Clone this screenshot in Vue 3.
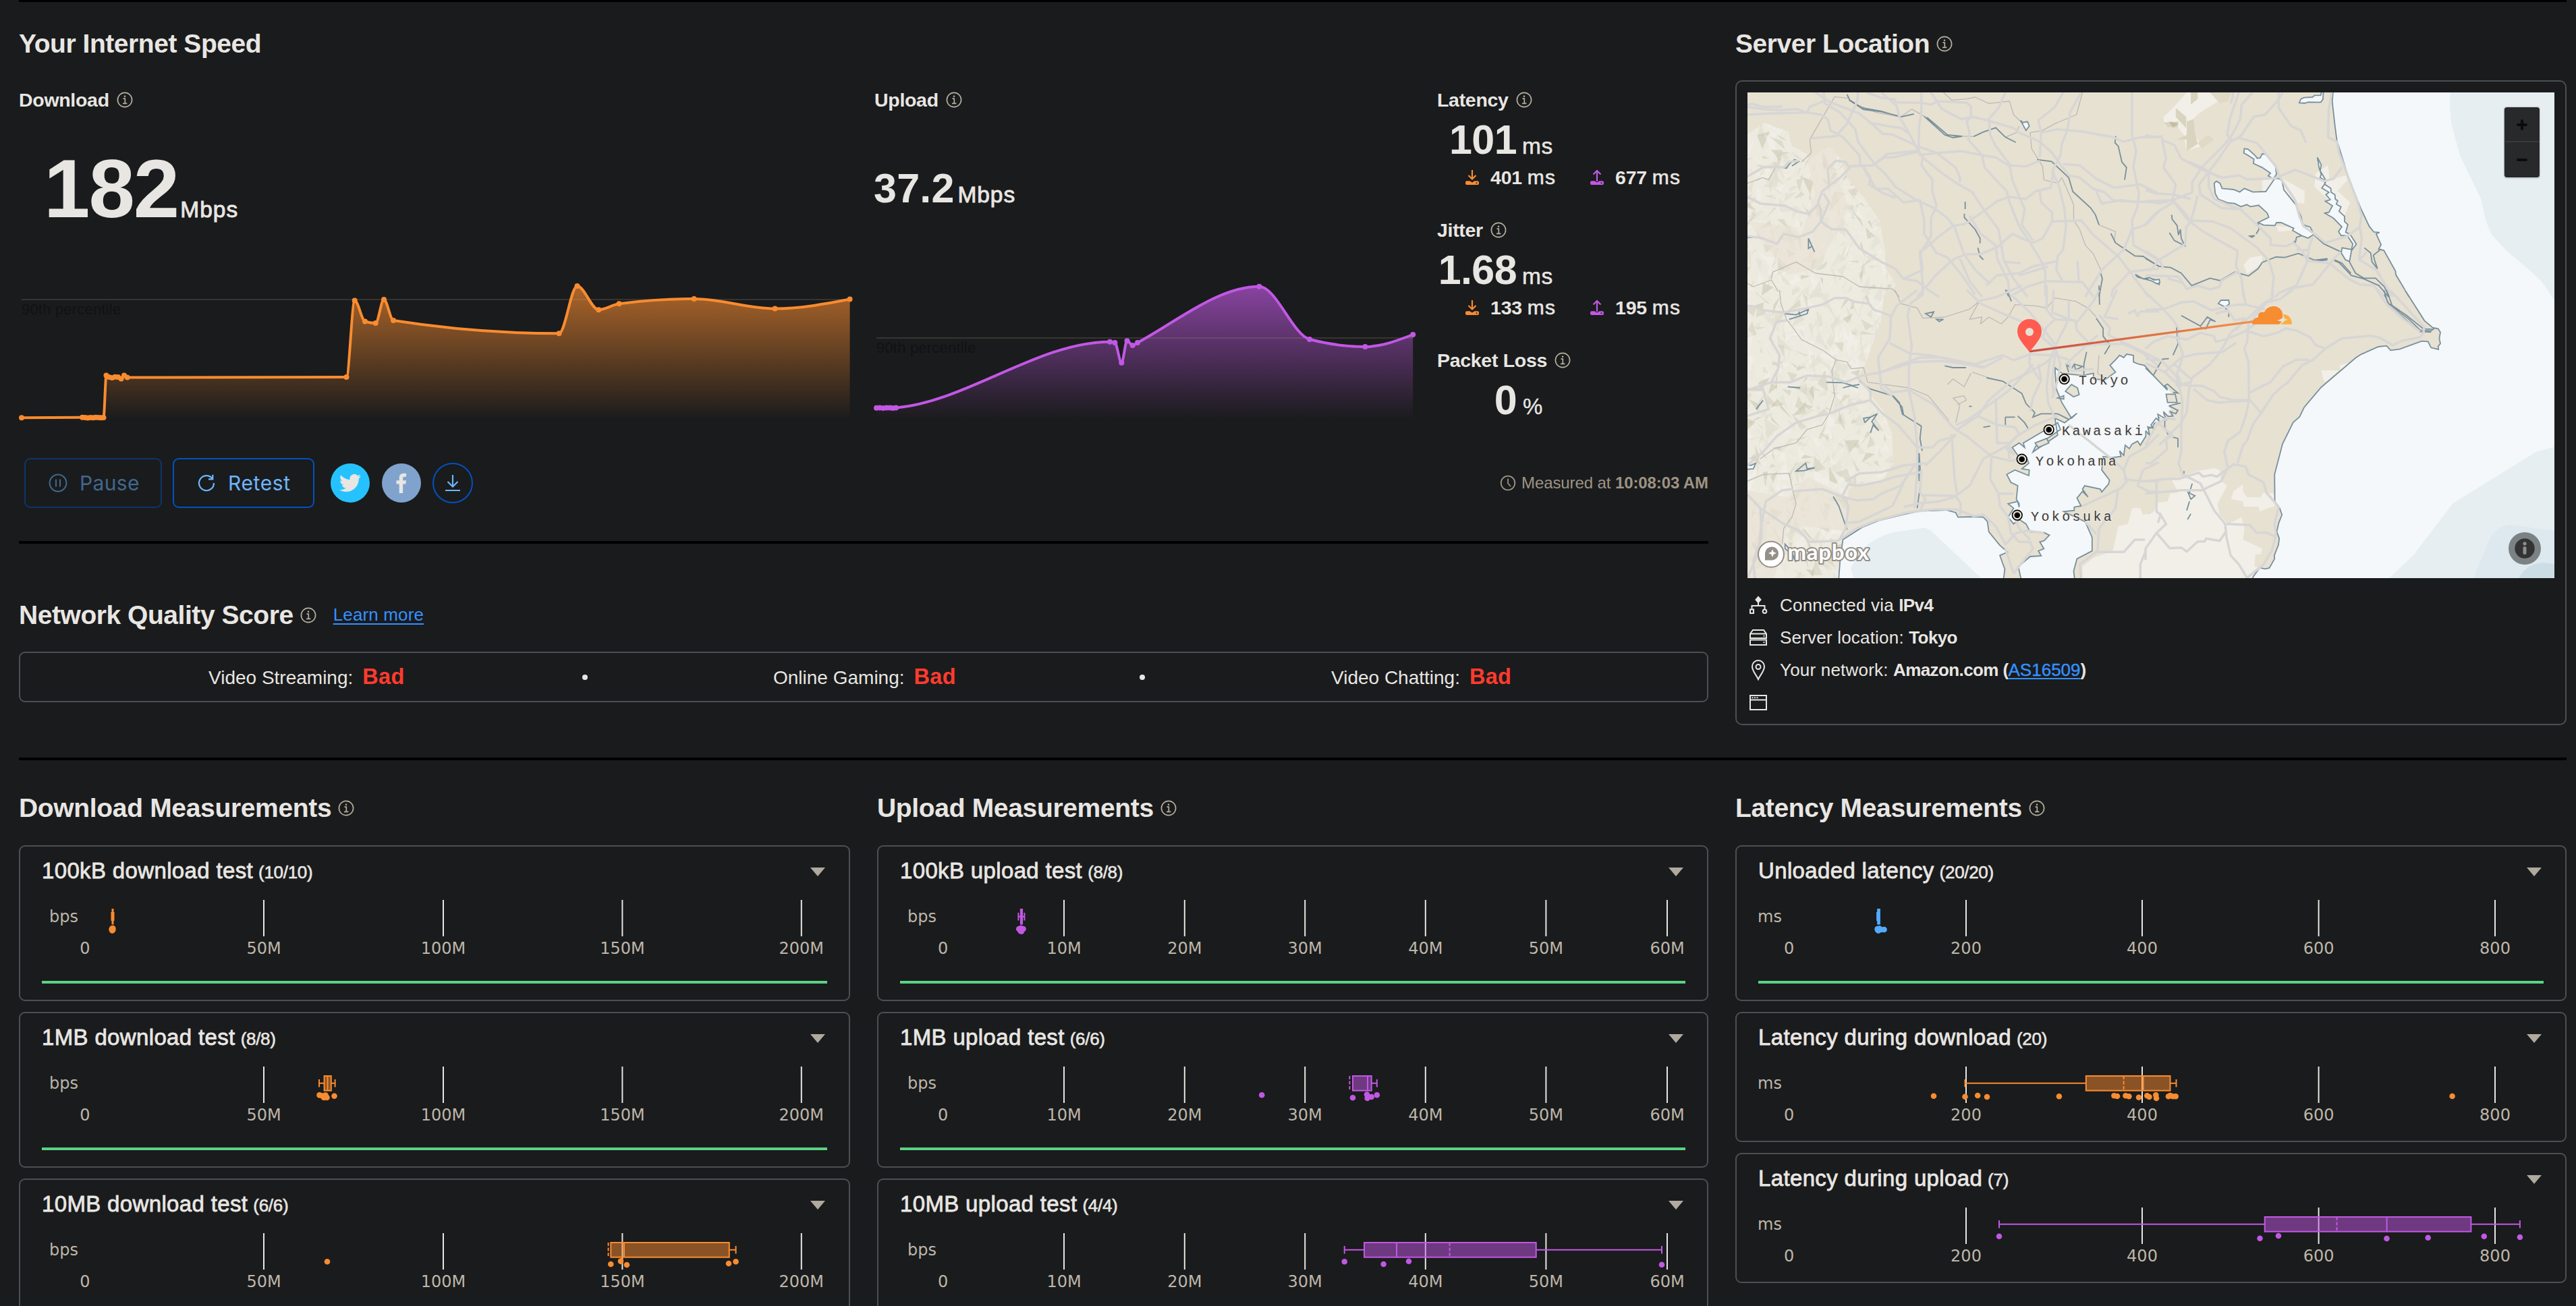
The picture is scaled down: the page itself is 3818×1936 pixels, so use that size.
<script setup>
import { h } from 'vue'

const ORANGE = '#f98c30'
const PURPLE = '#c158e4'
const BLUE = '#52abff'

/* ---------- speed over time ---------- */
// Monotone cubic interpolation through the measured points.
function curve(p) {
  const n = p.length
  const dx = []
  const slope = []
  for (let i = 0; i < n - 1; i++) {
    dx[i] = p[i + 1][0] - p[i][0]
    slope[i] = (p[i + 1][1] - p[i][1]) / dx[i]
  }
  const m = []
  for (let i = 1; i < n - 1; i++) {
    const a = slope[i - 1]
    const b = slope[i]
    const mid = (a * dx[i] + b * dx[i - 1]) / (dx[i] + dx[i - 1])
    m[i] = a * b <= 0 ? 0 : Math.sign(a) * Math.min(Math.abs(a), Math.abs(b), 0.5 * Math.abs(mid)) * 2
  }
  m[0] = (3 * slope[0] - m[1]) / 2
  m[n - 1] = (3 * slope[n - 2] - m[n - 2]) / 2
  let d = `M${p[0][0]},${p[0][1]}`
  for (let i = 0; i < n - 1; i++) {
    const t = dx[i] / 3
    d += `C${p[i][0] + t},${p[i][1] + m[i] * t} ${p[i + 1][0] - t},${p[i + 1][1] - m[i + 1] * t} ${p[i + 1][0]},${p[i + 1][1]}`
  }
  return d
}

const downPts = [
  [32, 619.2], [122, 618.8], [126, 619], [130, 619.4], [134, 618.9], [138, 619.2], [142, 618.8], [146, 619], [150, 619.2], [153.5, 619],
  [157.5, 556.5], [161.6, 559], [166, 560], [170.5, 558.8], [175, 559], [179.6, 561.5], [184, 556.5], [188.6, 559.6], [513.5, 559],
  [525.7, 445.6], [541, 476.5], [556.7, 479], [569, 444], [583, 475], [828.6, 494.3], [855.5, 424], [887.3, 459.2], [917.6, 450.3],
  [1028.6, 443], [1148.6, 457.6], [1259.6, 443.5],
]
const upPts = [
  [1300, 604.8], [1305, 604.4], [1310, 605], [1315, 604.6], [1320, 604.4], [1324.5, 605], [1329, 604.6], [1646, 506.8], [1653.4, 508],
  [1663.3, 537.7], [1671.5, 505.2], [1679.7, 512], [1687, 508], [1867.3, 424.7], [1942, 503], [2024.4, 514], [2095.2, 496],
]
const charts = {
  down: { pts: downPts, color: ORANGE, x0: 28, w: 1232, py: 444, id: 'fade-down' },
  up: { pts: upPts, color: PURPLE, x0: 1296, w: 800, py: 501, id: 'fade-up' },
}
for (const c of Object.values(charts)) {
  c.line = curve(c.pts)
  c.start = c.pts[0][0]
  c.end = c.pts[c.pts.length - 1][0]
  c.area = `${c.line}L${c.end},624L${c.start},624Z`
}

const SpeedChart = ({ c }) =>
  h('svg', { class: 'speed-chart', width: c.w, height: 220, viewBox: `${c.x0} 412 ${c.w} 220`, style: 'display:block;overflow:visible' }, [
    h('defs', [
      h('linearGradient', { id: c.id, gradientUnits: 'userSpaceOnUse', x1: 0, x2: 0, y1: 424, y2: 622 }, [
        h('stop', { offset: 0, 'stop-color': c.color, 'stop-opacity': 0.66 }),
        h('stop', { offset: 1, 'stop-color': c.color, 'stop-opacity': 0 }),
      ]),
    ]),
    h('path', { d: c.area, fill: `url(#${c.id})` }),
    h('path', { d: `M${c.start},${c.py}H${c.end}`, stroke: '#b0a080', 'stroke-opacity': 0.2, 'stroke-width': 2 }),
    h('text', { x: c.start, y: c.py + 21.5, 'font-size': 22, 'letter-spacing': 0.2, fill: '#111213' }, '90th percentile'),
    h('path', { d: c.line, fill: 'none', stroke: c.color, 'stroke-width': 4, 'stroke-linejoin': 'round' }),
    ...c.pts.map(([x, y]) => h('circle', { cx: x, cy: y, r: 4, fill: c.color })),
  ])

/* ---------- box plots ---------- */
const downTicks = [[98, '0'], [363, '50M'], [629, '100M'], [894.4, '150M'], [1159.8, '200M']]
const upTicks = [[97.6, '0'], [277, '10M'], [455.8, '20M'], [634.2, '30M'], [812.8, '40M'], [991.4, '50M'], [1171, '60M']]
const msTicks = [[79.7, '0'], [342, '200'], [603, '400'], [864.6, '600'], [1126, '800']]

const sections = [
  {
    title: 'Download Measurements', unit: 'bps', ticks: downTicks,
    cards: [
      { name: '100kB download test', count: '(10/10)', bar: true, color: ORANGE,
        box: { solid: [139] },
        dots: [[138, 123.5], [139.4, 125], [138.4, 126.5], [137.6, 125], [139.2, 123]] },
      { name: '1MB download test', count: '(8/8)', bar: true, color: ORANGE,
        box: { lo: 445, q1: 452.6, med: 457.5, q3: 462.8, hi: 468.6 },
        dots: [[445.5, 123.4], [450, 124.6], [452, 127], [454.5, 123.6], [455.5, 126], [456.5, 127], [467.5, 124.7]] },
      { name: '10MB download test', count: '(6/6)', bar: true, color: ORANGE,
        box: { q1: 877.3, med: 897, q3: 1052.8, hi: 1062.6, mean: 873.6 },
        dots: [[457, 123.3], [877.3, 127], [892, 122.6], [901, 128], [1052, 126], [1062.6, 123.3]] },
    ],
  },
  {
    title: 'Upload Measurements', unit: 'bps', ticks: upTicks,
    cards: [
      { name: '100kB upload test', count: '(8/8)', bar: true, color: PURPLE,
        box: { solid: [213.4, 214.6], lo: 209.4, hi: 218.4 },
        dots: [[210.2, 124], [213, 123], [214, 127.6], [216.6, 124], [214, 125], [212.4, 127]] },
      { name: '1MB upload test', count: '(6/6)', bar: true, color: PURPLE,
        box: { q1: 705, med: 727, q3: 732.7, hi: 740.8, mean: 700.4 },
        dots: [[570.2, 123.3], [705, 127.3], [726, 122.5], [726.6, 128], [732.7, 126], [740.8, 123.3]] },
      { name: '10MB upload test', count: '(4/4)', bar: true, color: PURPLE,
        box: { lo: 692.7, q1: 722, med: 770, q3: 976.7, hi: 1163, mean: 848.6 },
        dots: [[692.7, 123.2], [750.6, 127], [788, 122.7], [1163, 127.7]] },
    ],
  },
  {
    title: 'Latency Measurements', unit: 'ms', ticks: msTicks,
    cards: [
      { name: 'Unloaded latency', count: '(20/20)', bar: true, color: BLUE,
        box: { solid: [211.6, 213.4] },
        dots: [[210.6, 124], [212, 126.5], [211, 125.5], [213.4, 123.6], [216, 125], [220.6, 125]] },
      { name: 'Latency during download', count: '(20)', color: ORANGE,
        box: { lo: 340.5, q1: 519.8, med: 604.6, q3: 644.5, hi: 653.5, mean: 575.6 },
        dots: [[294, 124.7], [340.5, 125.7], [359.2, 124], [373, 126], [479.9, 125.3], [561.4, 124.3], [566, 125], [578.5, 124.3], [583.4, 125.3], [598, 126.7], [610.3, 124.3], [613.5, 126], [623.3, 123.3], [624, 128], [642, 125.3], [644.5, 124], [648.6, 125.3], [652.7, 125.3], [1062.6, 125]] },
      { name: 'Latency during upload', count: '(7)', color: PURPLE,
        box: { lo: 391, q1: 784.7, med: 965.6, q3: 1090.4, hi: 1162.9, mean: 891.5 },
        dots: [[391, 123.7], [777.5, 126.7], [805, 123], [965.5, 127], [1026.7, 125.7], [1109.8, 123.7], [1162.9, 125]] },
    ],
  },
]

/* ---------- map relief ---------- */
// Jittered triangles give the mountains their faceted shading.
let seed = 11
const rnd = () => ((seed = (seed * 16807) % 2147483647) / 2147483647)
const shades = ['#f4f1eb', '#f4f1eb', '#eae7dc', '#e0decf', '#dcd9ca', '#d0ccb8', '#c6c2aa', '#f0ede5']
const facets = []
for (let y = 48; y < 720; y += 12) {
  for (let x = -6; x < 250; x += 11) {
    const q = () => [(x + rnd() * 26 - 6).toFixed(0), (y + rnd() * 34 - 10).toFixed(0)].join()
    facets.push({ d: `M${q()}L${q()}L${q()}Z`, f: shades[Math.floor(rnd() * shades.length)] })
  }
}
const cities = [
  { n: 'Tokyo', x: 469.6, y: 425, tx: 491, ty: 433 },
  { n: 'Kawasaki', x: 446.7, y: 500, tx: 466, ty: 507.7 },
  { n: 'Yokohama', x: 406.7, y: 543.7, tx: 427, ty: 552.7 },
  { n: 'Yokosuka', x: 399.8, y: 626.7, tx: 420, ty: 635 },
]

/* ---------- small icons ---------- */
const InfoIcon = () =>
  h('svg', { width: 24, height: 24, viewBox: '0 0 24 24', fill: 'none', stroke: '#b5ae9f', 'stroke-width': 1.7, style: 'display:block;flex:none' }, [
    h('circle', { cx: 12, cy: 12, r: 10.6 }),
    h('path', { d: 'M9.5 10.2H12.3V17.3M9 17.3H15.4' }),
    h('circle', { cx: 12, cy: 6.8, r: 1.3, fill: '#b5ae9f', stroke: 'none' }),
  ])
const LoadIcon = (props) => {
  const color = props.up ? PURPLE : ORANGE
  return h('svg', { width: 22, height: 24, viewBox: '0 0 22 24', fill: 'none', stroke: color, 'stroke-width': 2.2, style: 'display:block;flex:none;margin-right:16px' }, [
    h('path', { d: props.up ? 'M11 18V2M5.5 7.5L11 2L16.5 7.5' : 'M11 1V14M5.5 9L11 14.5L16.5 9' }),
    h('path', { d: 'M3 17.2H7.5L11 19.5L14.5 17.2H19A2 2 0 0 1 21 19.2V21A2 2 0 0 1 19 23H3A2 2 0 0 1 1 21V19.2A2 2 0 0 1 3 17.2Z', fill: color, stroke: 'none' }),
    h('circle', { cx: 17.5, cy: 20.2, r: 1, fill: '#1a1b1c', stroke: 'none' }),
  ])
}
LoadIcon.props = { up: Boolean }
</script>

<template>
  <div class="page">
    <hr class="rule top" />
    <div class="upper">
      <div class="left">
        <h2>Your Internet Speed</h2>
        <div class="speeds">
          <section>
            <h3>Download <InfoIcon /></h3>
            <p class="value big"><b>182</b><span>Mbps</span></p>
            <SpeedChart :c="charts.down" />
          </section>
          <section>
            <h3 class="up-label">Upload <InfoIcon /></h3>
            <p class="value mid"><b>37.2</b><span>Mbps</span></p>
            <SpeedChart :c="charts.up" />
          </section>
          <section class="stats">
            <div class="stat">
              <h3>Latency <InfoIcon /></h3>
              <p class="value small"><b>101</b><span>ms</span></p>
              <p class="sub"><span><LoadIcon /><b>401</b>&nbsp;<i>ms</i></span><span><LoadIcon up /><b>677</b>&nbsp;<i>ms</i></span></p>
            </div>
            <div class="stat">
              <h3>Jitter <InfoIcon /></h3>
              <p class="value small"><b>1.68</b><span>ms</span></p>
              <p class="sub"><span><LoadIcon /><b>133</b>&nbsp;<i>ms</i></span><span><LoadIcon up /><b>195</b>&nbsp;<i>ms</i></span></p>
            </div>
            <div class="stat">
              <h3>Packet Loss <InfoIcon /></h3>
              <p class="value small pct"><b>0</b><span>%</span></p>
            </div>
          </section>
        </div>

        <div class="actions">
          <button class="btn disabled">
            <svg width="28" height="28" viewBox="0 0 28 28" fill="none" stroke="currentColor" stroke-width="2"><circle cx="14" cy="14" r="12.4" /><path d="M11 8.5V19.5M17 8.5V19.5" /></svg>
            Pause
          </button>
          <button class="btn">
            <svg width="28" height="28" viewBox="0 0 28 28" fill="none" stroke="currentColor" stroke-width="2.2"><path d="M22.5 7.2A11 11 0 1 0 25 14M23.3 1.8V8.3H17" /></svg>
            Retest
          </button>
          <span class="round tw">
            <svg width="32" height="32" viewBox="0 0 24 24" fill="#e8e6e3"><path d="M23.95 4.57a10 10 0 0 1-2.82.77 4.96 4.96 0 0 0 2.16-2.72c-.95.55-2 .95-3.13 1.18a4.92 4.92 0 0 0-8.38 4.48C7.69 8.1 4.07 6.13 1.64 3.16a4.82 4.82 0 0 0-.67 2.48c0 1.71.87 3.21 2.19 4.1a4.9 4.9 0 0 1-2.23-.62v.06a4.92 4.92 0 0 0 3.95 4.83 5 5 0 0 1-2.21.08 4.94 4.94 0 0 0 4.6 3.42A9.87 9.87 0 0 1 0 19.54a13.99 13.99 0 0 0 7.55 2.21c9.05 0 14-7.5 14-13.98 0-.21 0-.42-.02-.63a9.94 9.94 0 0 0 2.46-2.55z" /></svg>
          </span>
          <span class="round fb">
            <svg width="30" height="30" viewBox="0 0 24 24" fill="#e8e6e3"><path d="M9.4 24V13.1H6V8.9H9.4V5.9C9.4 2.4 11.4.6 14.6.6H17.6V4.5H15.6C14 4.5 13.7 5.2 13.7 6.4V8.9H17.6L17 13.1H13.7V24Z" /></svg>
          </span>
          <span class="round dl">
            <svg width="24" height="26" viewBox="0 0 24 26" fill="none" stroke="#6cb6ff" stroke-width="2.2"><path d="M12 1V18M4.5 11L12 18.5L19.5 11M1 24H23" /></svg>
          </span>
          <span class="measured">
            <svg width="24" height="24" viewBox="0 0 24 24" fill="none" stroke="#9d9384" stroke-width="1.8"><circle cx="12" cy="12" r="10.3" /><path d="M12 5.5V12.5L16 17" /></svg>
            Measured at&nbsp;<b>10:08:03 AM</b>
          </span>
        </div>

        <hr class="rule" />
        <h2 class="nqs">Network Quality Score <InfoIcon /><a>Learn more</a></h2>
        <div class="scores">
          <span class="score">Video Streaming:<b>Bad</b></span>
          <i class="bullet"></i>
          <span class="score">Online Gaming:<b>Bad</b></span>
          <i class="bullet"></i>
          <span class="score">Video Chatting:<b>Bad</b></span>
        </div>
      </div>

      <div class="right">
        <h2>Server Location <InfoIcon /></h2>
        <div class="panel">
          <svg class="map" width="1196" height="720" viewBox="0 0 1196 720">
            <defs>
              <clipPath id="hills">
                <path d="M0,62 L25,45 L60,58 L66,80 L98,95 L122,80 L140,100 L146,125 L172,155 L196,190 L204,235 L204,260 L222,285 L202,300 L198,340 L188,365 L176,400 L162,425 L180,445 L200,470 L214,505 L216,550 L200,575 L150,588 L146,650 L140,720 H0 Z" />
              </clipPath>
              <linearGradient id="route" gradientUnits="userSpaceOnUse" x1="418" y1="0" x2="750" y2="0">
                <stop offset="0" stop-color="#c94c3f" /><stop offset="1" stop-color="#f1924a" />
              </linearGradient>
            </defs>
            <rect width="1196" height="720" fill="#e7e1d2" />
            <g clip-path="url(#hills)">
              <rect width="260" height="720" fill="#edeae0" />
              <path v-for="(t, i) in facets" :key="i" :d="t.d" :fill="t.f" opacity=".5" />
              <path d="M80,60 L140,70 L128,110 L150,170 L120,230 L95,270 L80,210 L100,150Z M0,190 L70,200 L110,260 L60,270Z M0,590 L60,600 L90,570 L150,600 L145,650 L60,640 L40,720 H0Z" fill="#e7e1d2" opacity=".6" />
            </g>

            <!-- north-west tile -->
            <g transform="translate(-30 -137) scale(.40816 .33333)">
              <g class="border">
                <path d="M73,815L130,790L150,800L180,735M300,620L390,430L440,437M300,620L305,680L270,720M160,1240L165,1210L250,1165L320,1215L420,1230L480,1275L600,1285L625,1320M73,1260L95,1275L160,1245L185,1295M785,411L815,445L870,440L900,432L950,460L1025,450L1040,510L1070,545M1290,411L1268,510L1190,550L1145,580L1100,590L1105,660L1145,740L1150,800L1200,815L1215,790L1258,910L1258,980L1280,1020L1300,1090L1330,1130L1360,1210M1350,1000L1410,1030L1405,1075M470,465L540,500L630,520L670,485L715,517M820,605L895,607M1010,610L1050,590L1060,560" />
              </g>
              <g class="river">
                <path d="M435,420L445,445L490,480L560,495L630,520L678,507M442,445L495,487L560,497L625,517M715,517L790,600L820,612L853,606M725,522L800,600L850,606M895,607L930,587L975,568L1010,610L1048,633M1125,710L1178,718L1240,790L1255,852L1320,925L1337,955L1350,1000M1393,1038L1410,1080L1480,1138L1510,1140L1568,1185M1411,605L1408,635L1420,650L1433,720L1450,745L1443,800M864,897V930M861,950V967L900,1020L918,1060V1082M910,1102L918,1140L930,1155M1355,1210L1362,1240L1350,1320M295,1060L317,1120M295,1060V1105L308,1095M195,745L215,748L225,730L245,710L260,718L235,738M73,1056H103M1010,1288L1022,1320" />
                <path class="lake" d="M1065,535L1085,580L1097,560L1090,541L1073,545Z M1482,1220L1510,1240L1530,1235L1568,1250V1265L1550,1248L1530,1245L1490,1232Z" />
              </g>
              <g class="road">
                <path d="M73,475L130,485L195,490L250,485L290,500L340,510L365,530L375,580L420,610L450,650L480,690L483,735M73,510L150,505L290,500L300,475L350,450M73,465L90,462L130,475H200M320,411L375,455L480,505L520,545L565,595L600,598L690,650L760,680L830,745L845,790V810M350,411L355,460L410,500L465,575L475,630L510,690L540,735L575,775L610,830L680,885L750,925L800,970L825,1010L860,1130L900,1200L955,1262M475,411L472,450L435,550L395,605L305,615M505,411L560,435L605,440L615,455L700,457L740,465L765,450L870,457L885,475V520L870,540L880,590L875,620L925,690L935,745L975,800L1015,850L1025,900L1060,1005L1100,1080L1140,1160L1155,1210V1320M560,411L615,470L625,520L655,580L690,660L710,700L705,735L745,800V850L760,915L740,970V1050L700,1130L705,1200L712,1290L690,1320" />
                <path d="M705,411V500L697,560L695,670L580,685L530,735L450,740L410,790L345,850L330,900L340,935V985M740,411L780,485L850,530L890,520L945,535L1040,570L1060,590L1135,630L1180,680L1215,740L1240,780L1280,790L1330,840L1370,855L1400,890L1440,895L1568,900M1010,411L985,480L950,530L955,600L975,650L1025,730L1035,800L1080,930L1070,1000L1110,1070M1220,411L1190,475L1130,535L1140,590L1135,700M1285,411L1245,500L1235,580L1215,640L1210,690L1180,760L1205,830L1225,930L1230,1010L1220,1110L1200,1140L1195,1200L1220,1255M1470,411V600L1485,670L1475,740L1495,860L1490,920L1470,980L1475,1090L1530,1130L1568,1160M1135,590L1200,575L1290,585L1400,610L1440,630L1500,610H1568" />
                <path d="M515,545L580,560L635,570L655,590M530,735L570,700L600,700L695,675M695,690L760,680L850,672L925,690L975,700L1020,735L1085,740L1135,715M710,700L780,770L840,820L890,855L930,930L985,1020L1005,1160L1040,1240L1090,1320M1220,730L1280,735L1340,795L1405,835L1500,820L1568,862M73,875L120,905L210,915L255,940L295,952L330,910M73,1050L130,1060L180,1085L205,1040L260,1055L310,1030L340,985L380,1020H430L480,1105L560,1165L610,1195L640,1240L690,1250L730,1290L770,1320M73,785L130,745L180,740L205,745L225,720L260,715M370,830L365,750L395,715L430,720L440,740L490,735L520,790L515,820L560,855L610,880M495,745L540,840H585L640,900L700,890L715,980V1040L760,1125L800,1145L850,1220L900,1310M715,1110L770,1050L820,1005L865,995L930,940L980,895L1025,875L1085,885L1120,850L1175,835L1185,760" />
                <path d="M1135,850L1140,900L1180,945V985L1285,980L1330,1045L1420,1140L1500,1270L1530,1320M720,1280L760,1220L825,1150L870,1130H920L980,1100L1035,1040L1070,1060L1110,1080L1145,1060L1180,985M940,1270L980,1225L1060,1215L1110,1185L1200,1160M1040,1310L1090,1275L1155,1250L1290,1255L1330,1320M1060,1225L1165,1185M1010,1165L1065,1170M1272,1160L1277,1260M1340,850L1360,905L1430,890L1495,900M1568,940L1520,1000L1470,1020L1440,1110L1360,1200L1300,1320M880,960L920,1040L975,1090L980,1150L1020,1250L1025,1320M845,1150L880,1250L925,1320M700,1110L710,1200L640,1240M1460,1210L1400,1290L1395,1320M1460,1210L1520,1200L1568,1195M350,860L370,900L340,985" />
              </g>
            </g>

            <!-- north-east tile -->
            <g transform="translate(590 -137) scale(.40688 .33333)">
              <path d="M150,411H235L265,450L200,500L172,530L175,590L205,650L150,670L140,600L120,570L70,560L65,520L100,480Z" fill="#f2efe8" />
              <path d="M165,411H190V440L165,465ZM65,545L120,540L118,568L80,565ZM110,480L148,520V570L110,520ZM175,530L180,590L190,640L150,672L150,620L115,620L150,600V540Z" fill="#d8d4c0" />
              <path d="M85,540L120,550L100,568Z" fill="#c3bda3" />
              <path d="M235,411H312L300,450L270,460ZM228,600L250,620L205,660L190,635Z" fill="#dfd9c6" />
              <path d="M425,800L500,795L580,850L578,905L545,900L500,840L425,850ZM620,770L665,735L670,800L730,780L735,800L700,850L745,900L725,960L650,870L615,830ZM357,1180L380,1145L425,1137V1165L400,1195L370,1217ZM475,1005L535,1010L530,1025L485,1030Z" fill="#f2efe8" />
              <path d="M683,411L680,450L690,560L697,625L738,785L785,930L815,1007L832,1032L840,1040L858,1088L849,1108L868,1113L910,1205L912,1222L960,1320L970,1340H1489V411Z" fill="#f4f8fb" />
              <path d="M1111,411L1108,455L1113,545L1145,690L1188,800L1222,885L1240,985L1262,1045L1315,1115L1385,1187L1440,1247L1482,1320L1489,1340V411Z" fill="#e6eef1" />
              <g class="river">
                <path d="M683,411L680,450L690,560L697,625L738,785L785,930L815,1007L832,1032L852,1034L840,1040L858,1088L849,1108L868,1113L910,1205L912,1222L960,1320" />
                <path d="M0,1150L50,1185L92,1190L130,1215L168,1270L235,1237L272,1248L325,1210L375,1227L410,1195L425,1167L475,1143L508,1145L557,1127L615,1157L663,1150M615,1163L663,1155M680,1155L705,1168L750,1225L795,1240L850,1270L885,1320M688,1155L715,1170L748,1215M742,1163L765,1215L795,1237L838,1237L870,1275L888,1320M613,1045L650,1085L712,1120M569,1048L550,1055L545,1082L540,1072M95,955L97,975L115,1003L120,1045L127,1020L130,1060L143,1093L105,1070L87,1035M797,1102L820,1125L825,1165L845,1195L835,1160L830,1135L858,1108M410,990L413,1020L403,1040M380,1050L398,1048L388,1055Z" />
                <path class="lake" d="M250,815L258,806L271,815L279,838L321,843L343,854L360,838L391,854L438,852L470,795L484,793L497,803L504,845L547,910L567,965L573,999L600,1010L613,1042L592,1059L569,1048L536,1025L540,1015L494,990L477,990L471,1003L430,1001L410,990L449,966L443,947L412,913L382,919L369,910L347,919L325,905L299,902L265,886L254,861Z" />
                <path class="lake" d="M360,661L373,663L398,690L407,704L418,702L425,684L437,686L473,739L477,775L466,795L447,782L455,770L425,745L393,727L395,708L373,691L358,680Z" />
                <path class="lake" d="M626,700L640,733L636,760L645,778L657,803L653,820L675,838L676,855L690,866L691,885L700,893L695,908L712,920L705,940L725,962V985L737,999L729,1033L745,1042L768,1086L750,1115L743,1163L728,1155L713,1125L716,1102L750,1110L755,1085L735,1048L712,1047L703,1030L715,1008L684,970L653,948L668,944L681,915L655,895L673,888L657,866L668,855L642,836L652,820L655,803L636,790L640,775L632,745Z" />
                <path class="lake" d="M560,457L566,440L578,434L608,432L616,424L638,424L642,405H648L646,442L638,455L592,454L580,459Z" />
                <path class="lake" d="M0,1240L15,1235L30,1245L50,1243L52,1258L42,1262L20,1248Z" />
              </g>
              <g class="road">
                <path d="M0,612L58,607L75,705L65,745L110,820L98,890L155,980L210,1030L265,1068L335,1115L330,1185L350,1240L357,1320M65,625L105,645L130,705L215,760L280,790L340,780L370,798L470,793L545,755L650,805L685,795L715,745M340,411L308,525L297,600L320,625L350,600L395,518L435,510L480,450L500,411M390,411L350,465L345,530L315,600L290,640L205,745L170,810V855L100,890L0,895M485,411V480L530,560L565,580L585,635M318,411V430L310,460M335,612L405,635L475,740L490,790L545,890L560,960L575,1005L620,1045L655,1080L735,1050L780,1010L787,960L770,890L705,680L697,630L665,610L667,490L678,411" />
                <path d="M315,620L270,700L195,820L200,865L275,925L345,930L410,1005L455,1060L457,1090L510,1095L540,1080L570,1115L590,1160L570,1215L550,1270L490,1300L470,1320M0,845L35,860L100,865L165,885M0,895L50,905L100,890M0,995L40,945L100,900M155,980L245,985L310,1015L405,1100L450,1160L467,1230L460,1320M190,870L165,985L148,1010L145,1085L50,1155L20,1200H0M0,1115L50,1155L65,1195M0,1225L120,1230L150,1285L190,1270L235,1287L270,1275L275,1250L340,1205M80,1238L140,1260M610,1050L595,1100L590,1160L670,1170L740,1240L780,1265L830,1270L870,1320M710,1120L670,1175L610,1265L540,1280L500,1320M780,1005L787,1060L778,1155L840,1200L900,1320M778,1160L805,1120M230,765V830L250,885L300,910L345,930L380,970M160,720L205,745L270,790M0,600L35,612M100,890L145,950L160,975M550,1110L590,1112" />
              </g>
            </g>

            <!-- south-west tile -->
            <g transform="translate(-30 293) scale(.40816 .33333)">
              <path d="M1470,970L1500,970L1510,1000L1530,995L1540,1040L1590,1030V1290H1290V1230L1330,1190L1400,1160L1420,1050L1455,1040Z" fill="#f2efe8" />
              <g class="border">
                <path d="M190,0L195,60L215,130L240,170L270,220L350,270L395,310L435,320L450,350L495,345L510,410L600,425L660,435L730,470L805,580M395,310L380,360L390,470L370,550L345,600L290,620L250,680L170,705L120,750M610,0L630,60L690,80L710,125L790,120L880,85L915,50M890,365L950,390M830,590L845,510L820,480L860,470L868,490L835,510M800,420L820,395L860,430L885,370M73,850L130,820L225,815L240,900L250,950L235,1010L205,1060L200,1130M915,50L880,130L925,120L920,150L950,120L995,150L1020,120L1045,65L1120,70L1160,80L1190,35L1265,50L1310,80L1340,120M1350,290L1345,370L1370,390" />
              </g>
              <g class="river">
                <path d="M480,405L520,440L600,470L635,520L640,555L705,605L700,660L708,715M602,470L625,500L637,555M697,725L703,850L690,970M693,725L697,850M360,410L420,412L455,425L480,420M420,435L450,425L475,435M385,918L405,960L435,1065M790,337L820,345H867M942,390L1000,405L1070,460L1085,505L1117,545L1110,565L1140,550L1200,550L1240,575M1340,125L1365,170V205L1390,245L1370,285M1010,565H1045M1010,565V600M1350,-20L1352,65M1015,0L1032,50M930,610L955,605M1055,560L1080,590L1095,620M1305,275L1295,330V380M500,590L520,565L545,550L525,585L550,625L530,600L520,635M500,590L495,570L520,565M250,805L285,770L290,795L318,790L280,803ZM210,105L250,110L295,85L290,105L225,130M260,95L265,115M720,105L750,97L740,120ZM760,130L785,130L770,140ZM130,490L105,530M220,430L265,435M210,1130L225,1150L250,1210L240,1180L210,1150ZM878,517H888" />
                <path class="lake" d="M60,770L85,780L103,770L95,795L60,798Z" />
                <path class="lake" d="M1410,310L1425,290L1440,300L1450,285L1475,290V320L1495,330L1515,335L1568,410L1590,450V545L1560,575L1545,605L1520,625V650L1510,670L1500,690L1490,672L1470,685L1460,705L1445,690L1440,735L1425,715L1430,740L1395,745L1365,740L1360,800L1388,845L1385,862L1360,898L1355,885L1298,870L1290,885L1310,920L1290,895L1270,925L1285,960L1260,965V980L1222,985L1300,1030L1325,1100V1160L1270,1195L1258,1250L1262,1290H1068L1057,1230L1100,1185L1140,1182L1130,1160L1150,1150L1135,1120L1150,1115L1170,1090L1150,1078L1100,1075L1085,1040L1060,1020L1040,1040L1020,1010L1040,970L1020,950L1055,940L1060,965V950L1050,930L1055,870L1030,855L1015,820L1045,800L1095,825L1097,800L1070,795L1095,770L1085,740L1055,735L1035,700L1060,680L1080,700L1075,680L1200,590L1210,620L1120,695L1110,720L1200,645L1190,570L1225,590L1270,548L1250,570L1215,500L1195,440L1190,345L1215,370L1290,380L1330,370V395L1370,400L1410,365L1390,335Z" />
                <path class="island" d="M1228,450L1250,420L1272,435L1278,465L1258,475ZM1118,680L1160,660L1168,680L1130,700ZM1200,480L1222,470V485ZM1232,330L1250,350L1260,330L1265,355L1290,340L1262,330M1230,325L1240,365" />
                <path class="lake" d="M400,1290L405,1281L410,1200L420,1110L490,1055L550,1025L640,998L700,983L795,978L830,990L838,1010L895,1008L930,1010L945,1030L950,1075L990,1135L1018,1165L990,1180L1000,1215L1008,1240L1003,1290Z" />
              </g>
              <path d="M460,1290L448,1235L490,1150Q540,1100 600,1078L718,1057L740,1070L930,1290Z" fill="#e6eef1" />
              <g class="road">
                <path d="M73,70L110,75L130,90L205,100L290,80L345,65L390,35H430L460,52L515,60L530,85L595,115L590,215L548,300L555,380L560,440L600,470M73,445L160,410L185,350L190,290L155,215L180,140L215,135M73,440H130L150,530L73,560M160,410H230L290,380L370,385L430,410L490,380L560,365L620,335L700,300H780L900,330L1000,290L1040,312L1100,285L1180,290M710,-20V20L665,60L655,110L670,250L660,330V450L680,560L690,700V800L680,970M690,0L615,70L595,120M590,235L660,280L760,295L850,325L930,345L1000,300M560,365L680,320L780,315L900,335L930,340M565,420L600,455L660,445L750,510L805,590L830,620L870,650L920,700L960,740L1030,760L1070,750M470,385L520,450V490L565,550L620,600L690,700H745L770,670L830,650M815,640L825,830L835,910L880,870L930,750L1020,690L1050,650L1120,600L1200,560" />
                <path d="M835,620L910,560L950,490L1030,405L1090,370L1160,320L1200,270M830,600L870,580L940,520L1020,450L1060,400L1110,330M910,560L980,600L1045,610L1060,640L1020,690L1025,750M975,480L980,680H1030M720,780L770,720L830,640M520,490L450,510L370,550L330,560L250,590L180,650L130,720L73,780M430,850L480,815L560,810L640,780L720,770M415,920L440,865L480,870L560,850L610,830L700,810M73,910L120,970L205,1040L260,1070L300,1120L400,1115L470,1060L540,1025L650,990L750,975H830L895,1005L930,1000L975,1050L1010,1130L1050,1080L1090,1070L1150,1080M240,895L345,885L420,920L470,935L530,930L560,905L630,870L680,780M240,885L200,890L140,940L125,1040L110,1180L73,1281M120,970L125,1100L95,1200L100,1281M420,920L440,960L430,1060L405,1115M440,1035L480,1030L600,960L640,860M705,912L830,915L848,950L845,1000M640,965L690,950L770,940L830,918M705,800L700,900L720,930L700,980" />
                <path d="M960,740L955,840L985,905L990,960L1020,1010L1030,1080L1060,1120H1100L1110,1150L1040,1260M1010,1150L1040,1260M1040,1000L1060,1060L1100,1110M985,905H1040M1185,0L1180,100L1265,140L1270,180L1310,230L1340,250M1240,50V130L1195,240L1170,320L1160,430L1165,500L1190,570M1160,-20V90L1190,130L1160,165L1145,210L1190,255L1210,330L1200,400L1180,480M1030,20L1100,100L1190,240M870,0L920,60L1010,110L1090,150L1180,250M910,50L980,30L1070,-20M1100,270L1210,255L1350,240H1440L1510,280L1568,340M1265,150L1330,50L1350,0M1415,0L1370,120L1420,130M1350,110L1390,170L1385,200L1568,310M1345,200L1230,330M1455,105L1480,90L1490,115L1500,95H1568M1240,600L1390,745L1440,800L1450,850L1430,880L1380,910L1290,960M1568,640L1520,700L1460,740L1440,800M1440,840L1500,850H1568M1568,765L1510,800L1490,870L1530,895L1568,900M1420,880L1410,970L1350,1060L1345,1160L1280,1220L1285,1281M1345,1165H1440L1480,1110H1530L1520,1160L1500,1220V1281M1300,1030L1340,1085M1530,1110L1568,1070M1190,290L1180,400L1185,470M1190,290L1240,310L1250,360L1330,350M1130,330L1140,400L1110,480L1100,540M1098,280V330L1135,400M1020,690L1040,730L1010,700M1190,130L1265,135" />
              </g>
            </g>

            <!-- south-east tile -->
            <g transform="translate(590 293) scale(.40688 .33333)">
              <path d="M-2,1010L30,985L45,945L80,940L90,905L120,900L95,845L190,805L250,792L270,800L275,850L297,870L262,950L270,1000L300,1040L350,1010L360,1060L355,1110L425,1150L420,1175H400L397,1230L415,1235L390,1290H-2ZM355,865V895L370,922H418L430,900L468,905L470,960L415,985L412,963H357L355,940L312,930L320,895ZM640,357H706L655,410L648,400ZM708,333L750,320L708,358Z" fill="#f2efe8" />
              <path d="M945,0L1016,136L1046,167L1066,172L1074,188L1070,215L1074,238L1066,250L1067,264L1040,256L1029,229L1006,227L925,263L893,268L878,248L848,252L785,286L766,301L640,432L578,521L561,564L538,588L499,684L470,820L471,941L487,965L497,999L485,1036L478,1075L487,1104L484,1133L469,1180L470,1195L451,1236L436,1240L416,1235L392,1275L388,1290H1489V-2H944Z" fill="#f4f8fb" />
              <path d="M1460,-8L1489,45V-8ZM1489,698L1425,718L1120,948L975,1180L880,1290H1489Z" fill="#e6eef1" />
              <path d="M1192,1290L1255,1105Q1285,1045 1330,1045L1489,1070V1290Z" fill="#dde8ef" />
              <path d="M1356,1290Q1385,1215 1450,1213L1489,1218V1290Z" fill="#ccdde5" />
              <path d="M-4,345L30,382L80,440L100,462L75,463L80,500L115,500L85,515L92,530L82,545L95,560L65,545V575L45,560L50,580L30,590L25,605L5,610L15,640L-4,625Z" fill="#f4f8fb" />
              <g class="river">
                <path d="M945,0L1016,136L1046,167L1066,172L1074,188L1070,215L1074,238L1066,250L1067,264L1040,256L1029,229L1006,227L925,263L893,268L878,248L848,252L785,286L766,301L640,432L578,521L561,564L538,588L499,684L470,820L471,941L487,965L497,999L485,1036L478,1075L487,1104L484,1133L469,1180L470,1195L451,1236L436,1240L416,1235L392,1275L388,1290" />
                <path d="M868,0L882,55L930,103L960,130L1000,178L1040,182L1052,170M878,0L898,68L950,112L1012,172L1050,175M870,20L890,72L1000,185L1040,187M130,113L200,160L225,120L255,140L235,132L220,172L200,165M290,80L303,95V120M113,165L118,240L100,290M85,305L62,307L28,380M70,575V610L85,650L118,660V700M140,805V815M150,825V833M170,860L160,900M155,900L180,915L165,930ZM160,940L150,980M165,995L153,1020M0,347L30,382L80,445M80,440L70,425L80,418L100,440L118,458L100,455M75,463H108L115,500H80ZM85,515L128,502M85,515L118,535L110,550L90,540L100,560L82,562L65,540L75,575L45,552L48,580L38,570L20,600L30,615L8,608L15,645L0,625" />
                <path class="lake" d="M265,60L275,45H303L305,62L290,75Z" />
              </g>
              <g class="road">
                <path d="M0,10L65,85L105,140L120,170V230L135,280L130,320L115,370L130,420L160,425H205L250,450L270,475L320,490H375M0,88L65,85L130,55L175,50L240,90L330,65H365L355,0M365,65L435,85M463,0V35L430,60L370,130L310,190L275,270L235,330L170,390L160,430L155,480L150,545L130,590L50,690M535,0L490,40L440,55L375,150L370,230L360,260L375,320L377,490L365,560L345,630L300,670L287,720L300,790L275,850L205,890L130,890L0,905M400,150L365,180L430,205L480,190L510,170L550,180L600,210L620,245L655,260L715,215L815,203L850,210L900,245L935,225L1000,210L1015,185M655,260L610,310L570,335L515,415L500,425L465,465L425,540L390,600L370,670L355,690L335,770M595,310H550L500,340L455,410L420,430L375,460M377,485L420,545" />
                <path d="M0,260L30,230L80,205L150,220L200,190L250,205L255,230L290,220L320,205L370,180M0,305L60,315L110,380L125,440L135,500L130,600V720L120,770L135,820L200,860L250,980L290,1040L295,1100L310,1180L340,1220L370,1280M0,325L70,365L130,300L180,285L280,275L330,235M70,365L100,400L130,430M175,440L225,490L265,500L375,492M105,330L170,400M0,690L40,600L75,570L110,575M50,595L100,650L75,660L78,710L20,770H0M0,850L75,840H120L195,812L210,830L240,822L260,830L320,775L365,785L375,820L430,855L440,900L485,965L470,1040L475,1090L460,1160L430,1220L370,1280M40,850V985L55,1000L45,1035M50,990L75,1040L40,1080L88,1148L130,1145L150,1163L190,1118H215L220,1105L270,1115L295,1070M40,1080L0,1150V1200M295,1040L380,1045L405,1080L440,1078L470,1095M843,0L880,65L940,130L1000,185M890,0L940,65L1015,165L1012,190M255,105L300,90L325,135L360,125L330,180M0,95L30,88M110,425L165,410" />
              </g>
            </g>

            <path d="M418,384L750,339.6" stroke="url(#route)" stroke-width="3.2" />
            <path d="M418,385C412,376 400,366 400,354A18,18 0 0 1 436,354C436,366 424,376 418,385Z" fill="#ff5c4f" />
            <circle cx="418" cy="355" r="6" fill="#e7e1d2" />
            <path d="M748,343.7C748,337 752,334 757,333.500C756,327 761,324 766,326C769,319 775,317 780,317C789,317 795,325 793,334C791,336 788,337 785,338L792,340L788,343.700Z" fill="#f78c31" />
            <path d="M794,329Q806,329 807,343.700H790Q795,341 796,338.500L801,337L796,335.500Z" fill="#fbad41" />

            <g v-for="c in cities" :key="c.n">
              <circle :cx="c.x" :cy="c.y" r="7.3" fill="#e7e1d2" stroke="#000" stroke-width="1.6" />
              <circle :cx="c.x" :cy="c.y" r="4.3" fill="#000" />
              <text class="city" :x="c.tx" :y="c.ty">{{ c.n }}</text>
            </g>

            <g class="logo">
              <circle cx="35" cy="684.7" r="19" fill="#fff" stroke="#949089" stroke-width="2" />
              <path d="M26,693.5V683A10,10 0 1 1 36,693.5Z" fill="#949089" />
              <path d="M37,677L38.7,681.3L43,683L38.7,684.7L37,689L35.3,684.7L31,683L35.3,681.3Z" fill="#fff" />
              <text x="59.5" y="693">mapbox</text>
            </g>

            <rect x="1120.5" y="20.5" width="55" height="108" rx="5" fill="#6a7173" opacity=".16" />
            <rect x="1121.8" y="22" width="52.2" height="104" rx="4" fill="#28292b" />
            <path d="M1121.8,73H1174" stroke="#37393b" stroke-width="2" />
            <path d="M1142,48H1154M1148,42V54M1142,100H1154" stroke="#0b0b0b" stroke-width="4" stroke-linecap="round" />
            <circle cx="1152" cy="676" r="24" fill="#7b8283" />
            <circle cx="1152" cy="676" r="14.7" fill="#333" />
            <circle cx="1152" cy="668.8" r="2.6" fill="#8a9091" />
            <path d="M1152,675.5V682.5" stroke="#8a9091" stroke-width="5" stroke-linecap="round" />
          </svg>
          <ul class="facts">
            <li>
              <svg width="28" height="28" viewBox="0 0 28 28" fill="none" stroke="#e8e6e3" stroke-width="2"><path d="M14 2L17.5 6L14 10L10.5 6Z" fill="#e8e6e3" /><path d="M14 10V15M4.500 20V15H23.500V20M2 20.500H7V26H2Z" /><circle cx="23.500" cy="23.200" r="2.800" /></svg>
              <span>Connected via <b>IPv4</b></span>
            </li>
            <li>
              <svg width="28" height="28" viewBox="0 0 28 28" fill="none" stroke="#e8e6e3" stroke-width="2"><path d="M2 8.500L6 3H22L26 8.500V15H2ZM2 8.500H26M2 17.500H26V25H2ZM21.500 11.800H23.500M21.500 21.300H23.500" /></svg>
              <span>Server location: <b>Tokyo</b></span>
            </li>
            <li>
              <svg width="28" height="32" viewBox="0 0 28 32" fill="none" stroke="#e8e6e3" stroke-width="2"><path d="M14 30C11 23 5 18 5 11A9 9 0 0 1 23 11C23 18 17 23 14 30Z" /><circle cx="14" cy="11.500" r="3.500" /></svg>
              <span>Your network: <b>Amazon.com (<a>AS16509</a>)</b></span>
            </li>
            <li>
              <svg width="28" height="28" viewBox="0 0 28 28" fill="none" stroke="#e8e6e3" stroke-width="2"><path d="M2 4H26V25H2ZM2 10.500H26" /><path d="M4.500 7.200H6.500M8 7.200H10M11.500 7.200H13.500" /></svg>
            </li>
          </ul>
        </div>
      </div>
    </div>

    <hr class="rule" />
    <div class="measurements">
      <section v-for="s in sections" :key="s.title">
        <h2>{{ s.title }} <InfoIcon /></h2>
        <article v-for="c in s.cards" :key="c.name" class="card" :class="{ short: !c.bar }">
          <header>
            <span class="name">{{ c.name }}</span><span class="count">{{ c.count }}</span>
            <svg class="caret" width="22" height="16" viewBox="0 0 22 16"><path d="M0 0H22L11 13Z" fill="#b0a99e" /></svg>
          </header>
          <svg class="plot" width="1228" height="145" viewBox="2 56 1228 145">
            <text :x="s.unit === 'bps' ? 45 : 33" y="113.500">{{ s.unit }}</text>
            <template v-for="(t, i) in s.ticks" :key="t[1]">
              <path v-if="i" :d="`M${t[0]},81V135`" stroke="#e8e6e3" stroke-width="2" />
              <text :x="t[0]" y="161" text-anchor="middle">{{ t[1] }}</text>
            </template>
            <g :stroke="c.color" fill="none" stroke-width="2">
              <template v-if="c.box.q1">
                <path v-if="c.box.lo" :d="`M${c.box.lo},105.700H${c.box.q1}M${c.box.lo},100V111.500`" />
                <path :d="`M${c.box.q3},105.700H${c.box.hi}M${c.box.hi},100V111.500`" />
                <rect :x="c.box.q1" y="95" :width="c.box.q3 - c.box.q1" height="21.700" :fill="c.color" fill-opacity=".5" />
                <path :d="`M${c.box.med},95V116.700`" />
                <path v-if="c.box.mean" :d="`M${c.box.mean},95V117`" stroke-dasharray="5 2.500" />
              </template>
              <template v-else>
                <path v-for="x in c.box.solid" :key="x" :d="`M${x},94V117.500`" stroke-width="3" />
                <path v-if="c.box.lo" :d="`M${c.box.lo},100V111.500M${c.box.hi},100V111.500M${c.box.lo},105.700H${c.box.hi}`" />
                <path v-else :d="`M${c.box.solid[0]},99V112`" stroke-width="5" />
              </template>
            </g>
            <circle v-for="(d, i) in c.dots" :key="i" :cx="d[0]" :cy="d[1]" r="4.300" :fill="c.color" />
          </svg>
          <div v-if="c.bar" class="bar"></div>
        </article>
      </section>
    </div>
  </div>
</template>

<style>
html,
body {
  background: #1a1b1c;
  margin: 0;
  overflow: hidden;
}
</style>

<style scoped>
.page {
  width: 3776px;
  height: 1936px;
  padding: 0 14px 0 28px;
  overflow: hidden;
  background: #1a1b1c;
  color: #e8e6e3;
  font-family: "Liberation Sans", Arial, sans-serif;
}
h2, h3, p, ul { margin: 0; padding: 0; font-weight: 700; }
h2 { display: flex; align-items: center; height: 46px; font-size: 39px; letter-spacing: -0.45px; line-height: 46px; gap: 10px; }
h3 { display: flex; align-items: center; height: 34px; font-size: 28.5px; letter-spacing: -0.3px; line-height: 34px; gap: 11px; }
b { font-weight: 700; }
a { color: #3391ff; text-decoration: underline; }
.rule { height: 4px; margin: 0; border: 0; background: #000; }
.rule.top { height: 3px; }

.upper { display: grid; grid-template-columns: 2504px 1232px; gap: 40px; height: 1120px; box-sizing: border-box; padding-top: 39px; }
.speeds { display: grid; grid-template-columns: 1232px 800px 402px; column-gap: 35px; margin-top: 43px; height: 501px; }
.up-label { padding-left: 1px; }
.value { display: flex; align-items: baseline; line-height: 1; font-weight: 400; }
.value span { font-size: 33.5px; -webkit-text-stroke: 0.9px; }
.value.big { margin: 55px 0 72px 37px; height: 120px; }
.value.big b { font-size: 123px; line-height: 120px; letter-spacing: -2px; }
.value.big span { margin-left: 3px; letter-spacing: 1px; }
.value.mid { margin: 84px 0 103px; height: 60px; }
.value.mid b { font-size: 61px; line-height: 60px; letter-spacing: 0.2px; }
.value.mid span { margin-left: 5px; letter-spacing: 0.9px; }

.stat { height: 193px; }
.value.small { margin-top: 12px; height: 60px; }
.value.small b { width: 118px; font-size: 61px; line-height: 60px; letter-spacing: -0.6px; display: flex; justify-content: flex-end; }
.value.small span { margin-left: 8px; letter-spacing: 0.6px; -webkit-text-stroke: 0.5px; }
.value.pct span { font-size: 33px; margin-left: 9px; -webkit-text-stroke: 0.3px; }
.sub { display: flex; margin-top: 9px; padding-left: 41px; font-size: 28.5px; line-height: 34px; }
.sub > span { display: flex; flex: none; align-items: center; width: 185px; letter-spacing: -0.2px; }
.sub i { font-style: normal; font-weight: 400; font-size: 30px; letter-spacing: 1.4px; -webkit-text-stroke: 0.6px; }

.actions { display: flex; align-items: center; height: 74px; margin: 47px 0 49px; padding-left: 8px; }
.btn { display: flex; align-items: center; justify-content: flex-start; box-sizing: border-box; width: 204px; height: 74px; padding: 0 0 0 34px; margin-right: 16px; border: 2px solid #0052c2; border-radius: 9px; background: none; color: #6cb6ff; font: 30px Inter, sans-serif; letter-spacing: 0.35px; gap: 18px; }
.btn + .btn { width: 210px; margin-right: 24px; padding-left: 34px; }
.btn.disabled { border-color: #0e356b; color: #41688f; }
.btn + .btn { letter-spacing: 0.6px; }
.round { display: flex; align-items: center; justify-content: center; box-sizing: border-box; width: 58px; height: 58px; margin-right: 18px; border-radius: 50%; }
.tw { background: #26c2ff; }
.fb { background: #80a3cd; }
.dl { width: 60px; height: 60px; margin-right: 0; margin-left: -1px; border: 2px solid #0052c2; }
.measured { display: flex; align-items: center; margin-left: auto; font-size: 24px; letter-spacing: -0.1px; color: #9d9384; }
.measured svg { margin-right: 8px; }

.nqs { margin-top: 83px; }
.nqs a { margin-left: 15px; margin-top: -2px; font-size: 26px; font-weight: 400; letter-spacing: 0.15px; text-decoration-thickness: 2px; text-underline-offset: 4px; }
.scores { display: grid; grid-template-columns: 554px 283px 543px 284px auto; align-items: center; box-sizing: border-box; height: 75px; margin-top: 31px; padding-left: 279px; border: 2px solid #4a5054; border-radius: 9px; }
.score { display: flex; align-items: baseline; font-size: 28px; line-height: 36px; }
.score b { margin-left: 14px; font-size: 32.5px; letter-spacing: 0.3px; color: #ff3b2e; }
.bullet { width: 8px; height: 8px; border-radius: 50%; background: #e8e6e3; }

.panel { box-sizing: border-box; height: 956px; margin-top: 31px; padding: 16px; border: 2px solid #4a5054; border-radius: 10px; }
.map { display: block; }
.road path, .border path, .river path { fill: none; stroke-linejoin: round; vector-effect: non-scaling-stroke; }
.road path { stroke: #d7d6d5; stroke-width: 3.5px; }
.border path { stroke: #bdbab7; stroke-width: 1.3px; }
.river path { stroke: #78909c; stroke-width: 1.8px; stroke-linejoin: miter; }
.river path.lake { fill: #f4f8fb; }
.river path.island { fill: #e7e1d2; }
.city { fill: #3c3c3c; stroke: #f2efe8; stroke-width: 2.5px; stroke-opacity: 0.6; paint-order: stroke; font: 20px "Liberation Mono", monospace; letter-spacing: 3.4px; }
.logo text { fill: #fff; stroke: #949089; stroke-width: 4px; stroke-linejoin: round; paint-order: stroke; font: bold 33px Lato, sans-serif; letter-spacing: 0.7px; }
.facts { margin-top: 16px; list-style: none; font-weight: 400; }
.facts li { display: flex; align-items: center; height: 48px; padding-left: 2px; font-size: 26px; letter-spacing: 0.2px; }
.facts svg { flex: none; margin-right: 18px; }
.facts b { letter-spacing: -0.6px; }
.facts a { font-weight: 400; letter-spacing: 0; text-decoration-thickness: 2px; text-underline-offset: 3px; -webkit-text-stroke: 0.4px; }

.measurements { display: grid; grid-template-columns: repeat(3, 1232px); gap: 40px; padding-top: 48px; }
.measurements h2 { margin-bottom: 32px; letter-spacing: -0.33px; }
.card { box-sizing: border-box; height: 231px; margin-bottom: 16px; border: 2px solid #4a5054; border-radius: 9px; }
.card.short { height: 193px; }
.card header { display: flex; align-items: baseline; height: 54px; box-sizing: border-box; padding: 18px 35px 0 32px; line-height: 36px; }
.name { font-size: 33px; letter-spacing: 0.35px; -webkit-text-stroke: 0.8px; }
.count { margin-left: 8px; font-size: 26px; letter-spacing: -0.3px; -webkit-text-stroke: 0.6px; }
.caret { margin-left: auto; }
.plot { display: block; }
.plot text { fill: #bdb6aa; font: 24px "DejaVu Sans", Verdana, sans-serif; }
.bar { height: 4px; margin: 0 32px; background: #5bd384; }
</style>
